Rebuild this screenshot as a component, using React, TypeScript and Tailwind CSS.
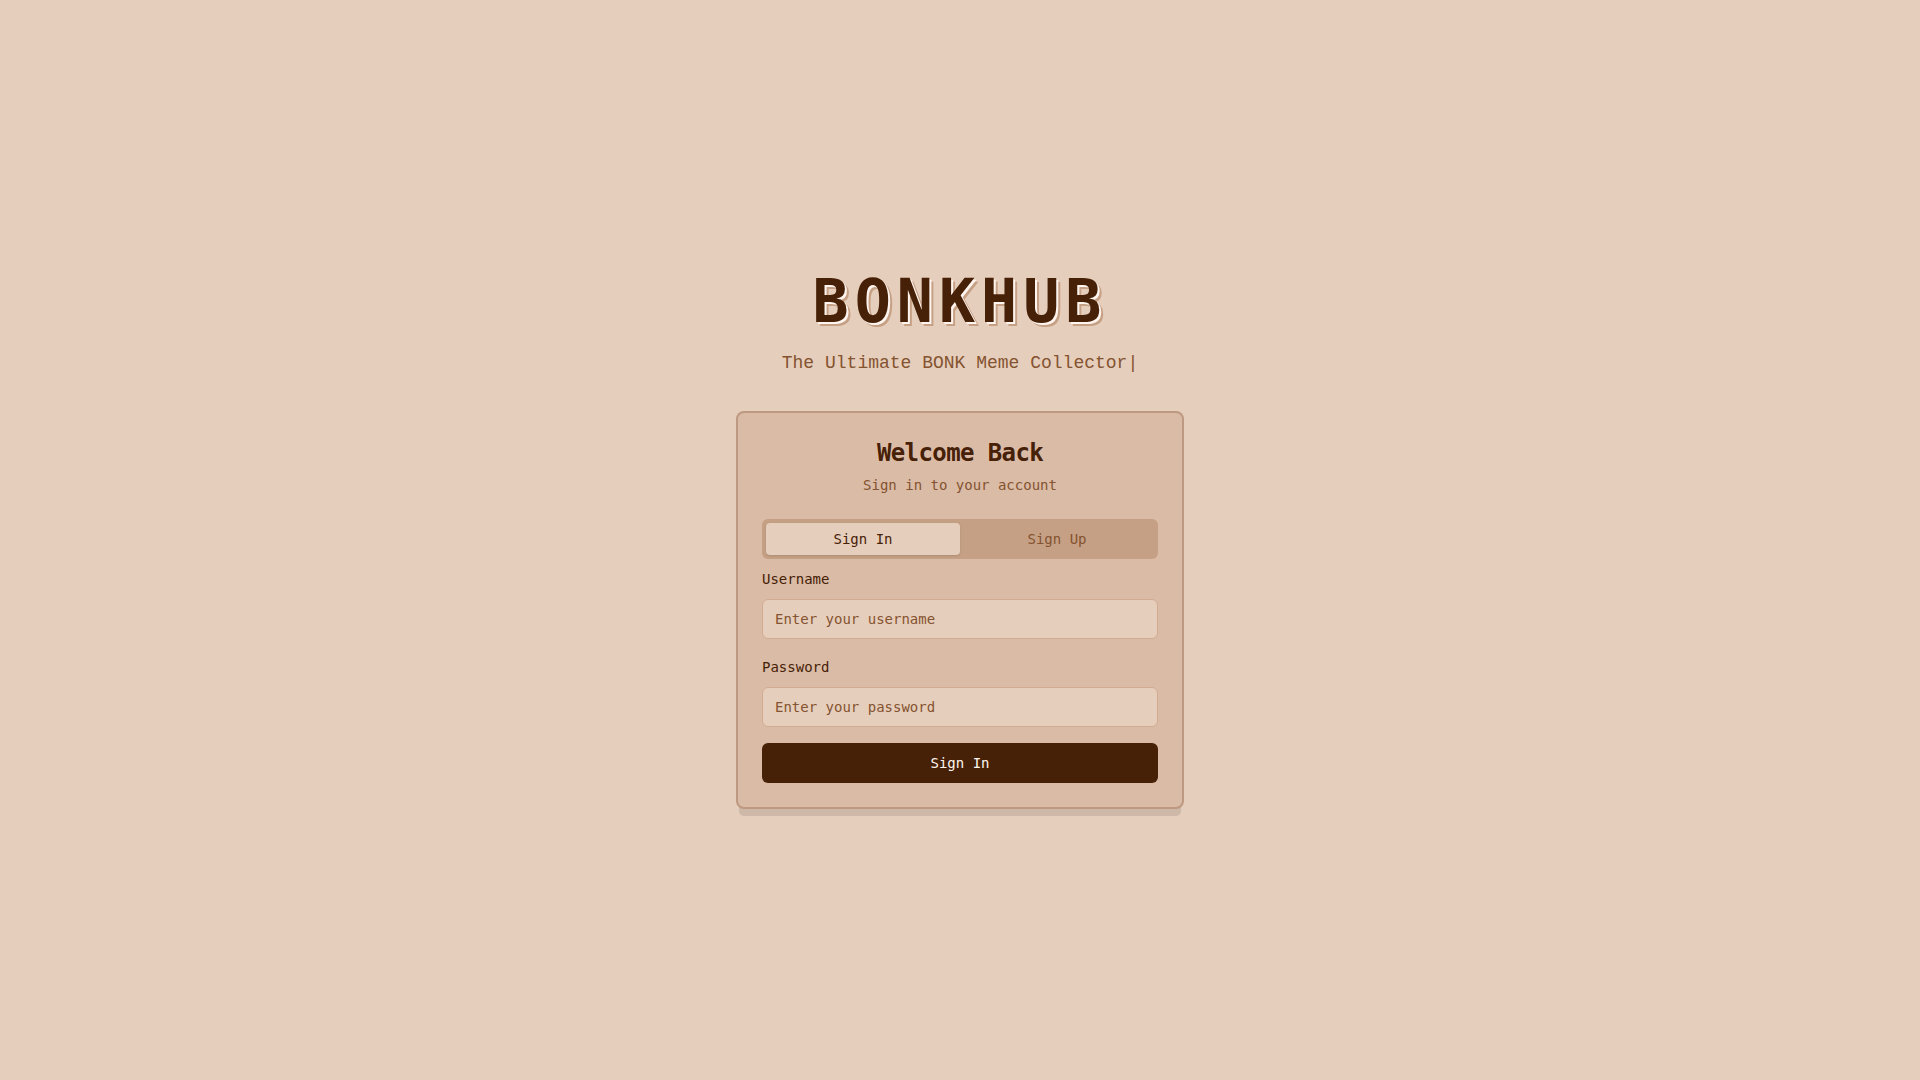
import { useState } from 'react';
import type { FormEvent, InputHTMLAttributes } from 'react';

const tabs = ['Sign In', 'Sign Up'];

interface FieldProps extends InputHTMLAttributes<HTMLInputElement> {
    id: string
    label: string
}

const Field = ({ id, label, ...props }: FieldProps) => (
    <div className="flex flex-col gap-2">
        <label htmlFor={id} className="text-sm leading-6 font-medium">{label}</label>
        <input
            id={id}
            className="h-10 w-full rounded-md border border-[#d2ab91] bg-[#e6cebc] px-3 text-sm placeholder:text-[#845330] outline-none focus:border-[#845330]"
            {...props}
        />
    </div>
)

const App = () => {
    const [active, setActive] = useState('Sign In');
    const [username, setUsername] = useState('');
    const [password, setPassword] = useState('');

    const onSubmit = (e: FormEvent) => {
        e.preventDefault();
    }

    return (
        <main className="flex min-h-screen flex-col items-center justify-center bg-[#e6cebc] font-['DejaVu_Sans_Mono',monospace] text-[#462107]">
            <h1 className="mb-4 text-6xl leading-none font-bold tracking-widest [text-shadow:2px_2px_0_#fff5ee,4px_4px_0_#c5a085]">BONKHUB</h1>
            <p className="mb-8 font-['Liberation_Mono',monospace] text-lg leading-8 text-[#845330]">
                The Ultimate BONK Meme Collector<span>|</span>
            </p>
            <section className="w-full max-w-md rounded-lg border-2 border-[#bc9980] bg-[#dabba6] p-6 shadow-[0_10px_0_-3px_rgba(0,0,0,0.1)]">
                <div className="mb-6 flex flex-col gap-1.5 text-center">
                    <h2 className="text-2xl font-bold tracking-tight">Welcome Back</h2>
                    <p className="text-sm text-[#845330]">Sign in to your account</p>
                </div>
                <div role="tablist" className="mb-2 grid h-10 grid-cols-2 rounded-md bg-[#c5a085] p-1">
                    {tabs.map((tab) => (
                        <button
                            key={tab}
                            type="button"
                            role="tab"
                            aria-selected={active === tab}
                            onClick={() => setActive(tab)}
                            className={active === tab ? "rounded-sm bg-[#e6cebc] text-sm font-medium shadow-sm" : "rounded-sm text-sm font-medium text-[#845330]"}
                        >
                            {tab}
                        </button>
                    ))}
                </div>
                <form className="flex flex-col gap-4" onSubmit={onSubmit}>
                    <Field
                        id="username"
                        label="Username"
                        type="text"
                        placeholder="Enter your username"
                        value={username}
                        onChange={(e) => setUsername(e.target.value)}
                    />
                    <Field
                        id="password"
                        label="Password"
                        type="password"
                        placeholder="Enter your password"
                        value={password}
                        onChange={(e) => setPassword(e.target.value)}
                    />
                    <button type="submit" className="h-10 w-full rounded-md bg-[#462107] text-sm font-medium text-[#fff5ee]">{active}</button>
                </form>
            </section>
        </main>
    )
}

export default App;
